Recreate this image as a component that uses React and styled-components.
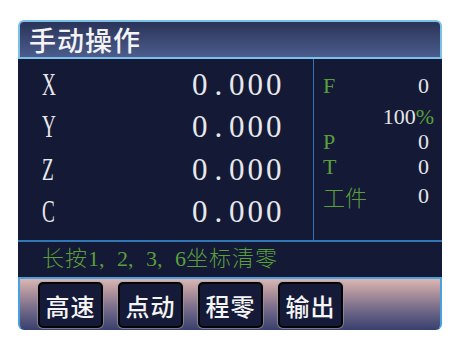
import React from "react";
import styled, { createGlobalStyle } from "styled-components";

const GlobalStyle = createGlobalStyle`
  html, body {
    margin: 0;
    padding: 0;
    background: #ffffff;
  }
`;

const Frame = styled.div`
  margin: 20px 0 0 18px;
  width: 424px;
  display: flex;
  flex-direction: column;
  font-family: "Liberation Serif", "Noto Sans CJK SC", serif;
`;

const Header = styled.div`
  box-sizing: border-box;
  height: 39px;
  border: 2px solid #7cc0ea;
  border-radius: 6px 6px 0 0;
  background: linear-gradient(#2a3358, #4b5d8d);
  display: flex;
  align-items: center;
  padding-left: 9px;
  color: #f4f4f4;
  font-family: "Noto Sans CJK SC", sans-serif;
  font-size: 27px;
  font-weight: 500;
  letter-spacing: 1px;
`;

const Main = styled.div`
  box-sizing: border-box;
  height: 183px;
  background: #141a35;
  border-bottom: 2px solid #2f78b5;
  display: grid;
  grid-template-columns: 295px 1fr;
`;

const AxisList = styled.div`
  padding: 5px 0 0 24px;
  display: flex;
  flex-direction: column;
`;

const AxisRow = styled.div`
  height: 42.3px;
  display: flex;
  align-items: center;
  color: #e8e8ec;
  font-size: 31px;
`;

const AxisName = styled.span`
  display: inline-block;
  width: 20px;
  transform: scaleX(0.62);
  transform-origin: left center;
`;

const Value = styled.div`
  margin-left: auto;
  margin-right: 30px;
  display: flex;
`;

const Cell = styled.span`
  display: inline-block;
  width: 18.5px;
  text-align: center;
`;

const Side = styled.div`
  border-left: 1px solid #2f78b5;
  padding: 14px 13px 0 9px;
  display: flex;
  flex-direction: column;
`;

const SideRow = styled.div`
  height: 25px;
  margin-top: ${(p) => p.$mt || 0}px;
  margin-right: ${(p) => p.$mr || 0}px;
  display: flex;
  align-items: center;
  justify-content: space-between;
  font-size: 22px;
  color: #e4e4e8;
`;

const Green = styled.span`
  color: #5a9f3b;
  font-family: ${(p) => (p.$cjk ? '"Noto Sans CJK SC", sans-serif' : "inherit")};
  font-size: ${(p) => (p.$cjk ? "22px" : "inherit")};
  font-weight: 300;
`;

const Status = styled.div`
  height: 35px;
  background: #141a35;
  padding-left: 24px;
  color: #5a9f3b;
  font-family: "Noto Sans CJK SC", sans-serif;
  font-size: 22px;
  line-height: 28px;
  letter-spacing: 1px;
  font-weight: 300;
`;

const Nums = styled.span`
  font-family: "Liberation Serif", serif;
  letter-spacing: 0;
  word-spacing: 7px;
`;

const Bar = styled.div`
  box-sizing: border-box;
  height: 53px;
  border: 2px solid #4aa0dc;
  border-bottom: none;
  border-radius: 0 0 6px 6px;
  background: linear-gradient(#dcb6b2 0%, #a88e9a 30%, #6f6787 62%, #38406f 100%);
  display: flex;
  align-items: flex-start;
  gap: 15px;
  padding: 3px 0 0 18px;
`;

const Button = styled.button`
  box-sizing: border-box;
  width: 65px;
  height: 46px;
  padding: 0;
  background: #141a38;
  border: 2px solid #050505;
  border-radius: 5px;
  box-shadow: 0 0 0 1px rgba(170, 160, 170, 0.55);
  color: #f4f4f4;
  font-family: "Noto Sans CJK SC", sans-serif;
  font-size: 24px;
  font-weight: 500;
  letter-spacing: 1px;
  display: flex;
  align-items: center;
  justify-content: center;
`;

const axes = ["X", "Y", "Z", "C"];
const buttons = ["高速", "点动", "程零", "输出"];

const Digits = ({ text }) => (
  <Value>
    {text.split("").map((c, i) => (
      <Cell key={i}>{c}</Cell>
    ))}
  </Value>
);

export default function App() {
  return (
    <>
      <GlobalStyle />
      <Frame>
        <Header>手动操作</Header>
        <Main>
          <AxisList>
            {axes.map((a) => (
              <AxisRow key={a}>
                <AxisName>{a}</AxisName>
                <Digits text="0.000" />
              </AxisRow>
            ))}
          </AxisList>
          <Side>
            <SideRow>
              <Green>F</Green>
              <span>0</span>
            </SideRow>
            <SideRow $mt={6} $mr={-5}>
              <span />
              <span>
                100<Green>%</Green>
              </span>
            </SideRow>
            <SideRow>
              <Green>P</Green>
              <span>0</span>
            </SideRow>
            <SideRow>
              <Green>T</Green>
              <span>0</span>
            </SideRow>
            <SideRow $mt={4}>
              <Green $cjk>工件</Green>
              <span>0</span>
            </SideRow>
          </Side>
        </Main>
        <Status>
          长按<Nums>1, 2, 3, 6</Nums>坐标清零
        </Status>
        <Bar>
          {buttons.map((b) => (
            <Button key={b}>{b}</Button>
          ))}
        </Bar>
      </Frame>
    </>
  );
}
